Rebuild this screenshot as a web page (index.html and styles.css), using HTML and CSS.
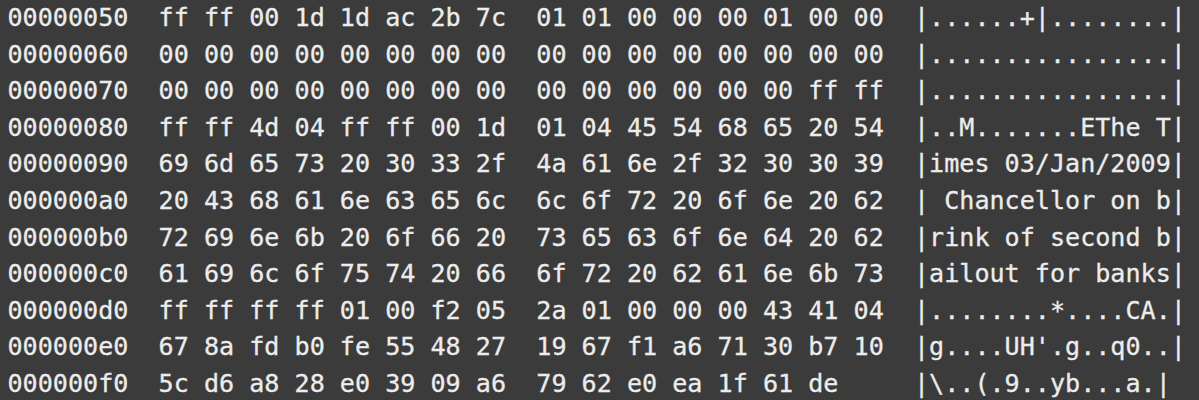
FILE: index.html
```html
<!DOCTYPE html>
<html>
<head>
<meta charset="utf-8">
<link rel="stylesheet" href="styles.css">
</head>
<body>
<pre class="dump">00000050  ff ff 00 1d 1d ac 2b 7c  01 01 00 00 00 01 00 00  |......+|........|
00000060  00 00 00 00 00 00 00 00  00 00 00 00 00 00 00 00  |................|
00000070  00 00 00 00 00 00 00 00  00 00 00 00 00 00 ff ff  |................|
00000080  ff ff 4d 04 ff ff 00 1d  01 04 45 54 68 65 20 54  |..M.......EThe T|
00000090  69 6d 65 73 20 30 33 2f  4a 61 6e 2f 32 30 30 39  |imes 03/Jan/2009|
000000a0  20 43 68 61 6e 63 65 6c  6c 6f 72 20 6f 6e 20 62  | Chancellor on b|
000000b0  72 69 6e 6b 20 6f 66 20  73 65 63 6f 6e 64 20 62  |rink of second b|
000000c0  61 69 6c 6f 75 74 20 66  6f 72 20 62 61 6e 6b 73  |ailout for banks|
000000d0  ff ff ff ff 01 00 f2 05  2a 01 00 00 00 43 41 04  |........*....CA.|
000000e0  67 8a fd b0 fe 55 48 27  19 67 f1 a6 71 30 b7 10  |g....UH'.g..q0..|
000000f0  5c d6 a8 28 e0 39 09 a6  79 62 e0 ea 1f 61 de     |\..(.9..yb...a.|</pre>
</body>
</html>
```
FILE: styles.css
```css
html, body {
  margin: 0;
  padding: 0;
  background: #3b3b3b;
  height: 100%;
  overflow: hidden;
}
.dump {
  margin: 0;
  padding: 0 0 0 7.5px;
  font-family: "DejaVu Sans Mono", "Liberation Mono", monospace;
  font-size: 25.1px;
  line-height: 36.6px;
  color: #ececec;
  white-space: pre;
  -webkit-text-stroke: 0.3px #ececec;
}
```
